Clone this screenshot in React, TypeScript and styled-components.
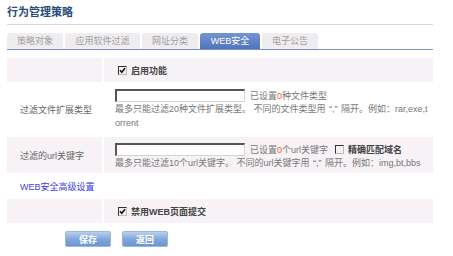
import React from 'react'
import styled, { createGlobalStyle } from 'styled-components'

const GlobalStyle = createGlobalStyle`
  html, body {
    margin: 0;
    padding: 0;
    background: #fff;
  }
  body {
    font-family: "Liberation Sans", "Noto Sans CJK SC", sans-serif;
    font-size: 9px;
    color: #666;
  }
`

const Page = styled.div`
  box-sizing: border-box;
  width: 433px;
  padding: 0 0 0 7px;
`

const Title = styled.h1`
  margin: 0;
  padding: 5px 0 5px;
  font-size: 11px;
  line-height: 14px;
  font-weight: bold;
  color: #2b4a7c;
  border-bottom: 1px solid #d9d9d9;
`

const Tabs = styled.div`
  display: flex;
  gap: 2px;
  margin-top: 8px;
  border-bottom: 1px solid #7a94cc;
`

const Tab = styled.div<{ $w: number; $active?: boolean }>`
  width: ${(p) => p.$w}px;
  height: 16px;
  line-height: 16px;
  text-align: center;
  border-radius: 3px 3px 0 0;
  font-size: 9px;
  color: ${(p) => (p.$active ? '#fff' : '#a0a0a0')};
  background: ${(p) =>
    p.$active ? 'linear-gradient(#7495d4, #4f74ba)' : '#eeecee'};
`

const Form = styled.div`
  display: flex;
  flex-direction: column;
  gap: 2px;
  margin-top: 8px;
`

const Row = styled.div<{ $h: number }>`
  display: grid;
  grid-template-columns: 95px minmax(0, 1fr);
  column-gap: 2px;
  height: ${(p) => p.$h}px;
`

const LabelCell = styled.div<{ $shaded?: boolean }>`
  display: flex;
  align-items: center;
  padding-left: 13px;
  background: ${(p) => (p.$shaded ? '#f6f2f6' : 'transparent')};
  color: #666;
`

const ValueCell = styled.div<{ $shaded?: boolean; $top?: number }>`
  display: flex;
  flex-direction: column;
  justify-content: ${(p) => (p.$top !== undefined ? 'flex-start' : 'center')};
  padding: ${(p) => (p.$top ?? 0)}px 0 0 11px;
  min-width: 0;
  background: ${(p) => (p.$shaded ? '#f6f2f6' : 'transparent')};
`

const Line = styled.div`
  display: flex;
  align-items: center;
  gap: 4px;
`

const Check = styled.label`
  display: flex;
  align-items: center;
  gap: 4px;
  padding-left: 3px;
  font-weight: bold;
  color: #444;
  font-size: 9px;
`

const Box = styled.span`
  display: inline-flex;
  align-items: center;
  justify-content: center;
  width: 7px;
  height: 7px;
  border-top: 1px solid #333;
  border-left: 1px solid #333;
  border-right: 1px solid #bbb;
  border-bottom: 1px solid #bbb;
  background: #f2f2f2;
`

const TextInput = styled.input`
  box-sizing: border-box;
  width: 130px;
  height: 13px;
  margin: 0;
  padding: 0;
  border-top: 2px solid #555;
  border-left: 2px solid #555;
  border-right: 1px solid #d4d4d4;
  border-bottom: 1px solid #d4d4d4;
  background: #fff;
`

const Note = styled.span`
  color: #777;
  margin-left: 1px;
`

const Count = styled.span`
  color: #ff5a1f;
`

const Help = styled.div`
  line-height: 14px;
  color: #777;
  padding-right: 3px;
  word-break: break-all;
`

const Quote = styled.span`
  margin: 0 1px;
`

const LinkRow = styled.div`
  height: 22px;
  display: flex;
  align-items: center;
  padding-left: 13px;
`

const Link = styled.a`
  color: #3b3be8;
  text-decoration: none;
  font-size: 9px;
`

const Buttons = styled.div`
  display: flex;
  gap: 11px;
  margin-top: 8px;
  padding-left: 58px;
`

const Button = styled.button`
  width: 46px;
  height: 16px;
  padding: 0;
  border: 1px solid #9fb6d8;
  border-radius: 2px;
  background: linear-gradient(#b9d0ee, #7fa5d9 55%, #6d95cf);
  color: #fff;
  font-family: "Liberation Sans", "Noto Sans CJK SC", sans-serif;
  font-size: 9px;
  font-weight: bold;
  box-shadow: 0 1px 1px rgba(0, 0, 0, 0.15);
`

const Tick = () => (
  <svg width="7" height="7" viewBox="0 0 7 7">
    <path d="M1 3.2 L2.8 5.2 L6 1.2" fill="none" stroke="#111" strokeWidth="1.6" />
  </svg>
)

const CheckBox: React.FC<{ checked?: boolean; label: string }> = ({ checked, label }) => (
  <Check>
    <Box>{checked && <Tick />}</Box>
    {label}
  </Check>
)

const App: React.FC = () => {
  return (
    <Page>
      <GlobalStyle />
      <Title>行为管理策略</Title>
      <Tabs>
        <Tab $w={56}>策略对象</Tab>
        <Tab $w={75}>应用软件过滤</Tab>
        <Tab $w={56}>网址分类</Tab>
        <Tab $w={60} $active>WEB安全</Tab>
        <Tab $w={56}>电子公告</Tab>
      </Tabs>
      <Form>
        <Row $h={24}>
          <LabelCell $shaded />
          <ValueCell $shaded>
            <CheckBox checked label="启用功能" />
          </ValueCell>
        </Row>
        <Row $h={51}>
          <LabelCell>过滤文件扩展类型</LabelCell>
          <ValueCell $top={5}>
            <Line>
              <TextInput />
              <Note>
                已设置<Count>0</Count>种文件类型
              </Note>
            </Line>
            <Help>
              最多只能过滤20种文件扩展类型。 不同的文件类型用 <Quote>“,”</Quote> 隔开。例如：rar,exe,torrent
            </Help>
          </ValueCell>
        </Row>
        <Row $h={36}>
          <LabelCell $shaded>过滤的url关键字</LabelCell>
          <ValueCell $shaded $top={6}>
            <Line>
              <TextInput />
              <Note>
                已设置<Count>0</Count>个url关键字
              </Note>
              <CheckBox label="精确匹配域名" />
            </Line>
            <Help>
              最多只能过滤10个url关键字。 不同的url关键字用 <Quote>“,”</Quote> 隔开。例如：img,bt,bbs
            </Help>
          </ValueCell>
        </Row>
        <LinkRow>
          <Link href="#">WEB安全高级设置</Link>
        </LinkRow>
        <Row $h={24}>
          <LabelCell $shaded />
          <ValueCell $shaded>
            <CheckBox checked label="禁用WEB页面提交" />
          </ValueCell>
        </Row>
      </Form>
      <Buttons>
        <Button>保存</Button>
        <Button>返回</Button>
      </Buttons>
    </Page>
  )
}

export default App
